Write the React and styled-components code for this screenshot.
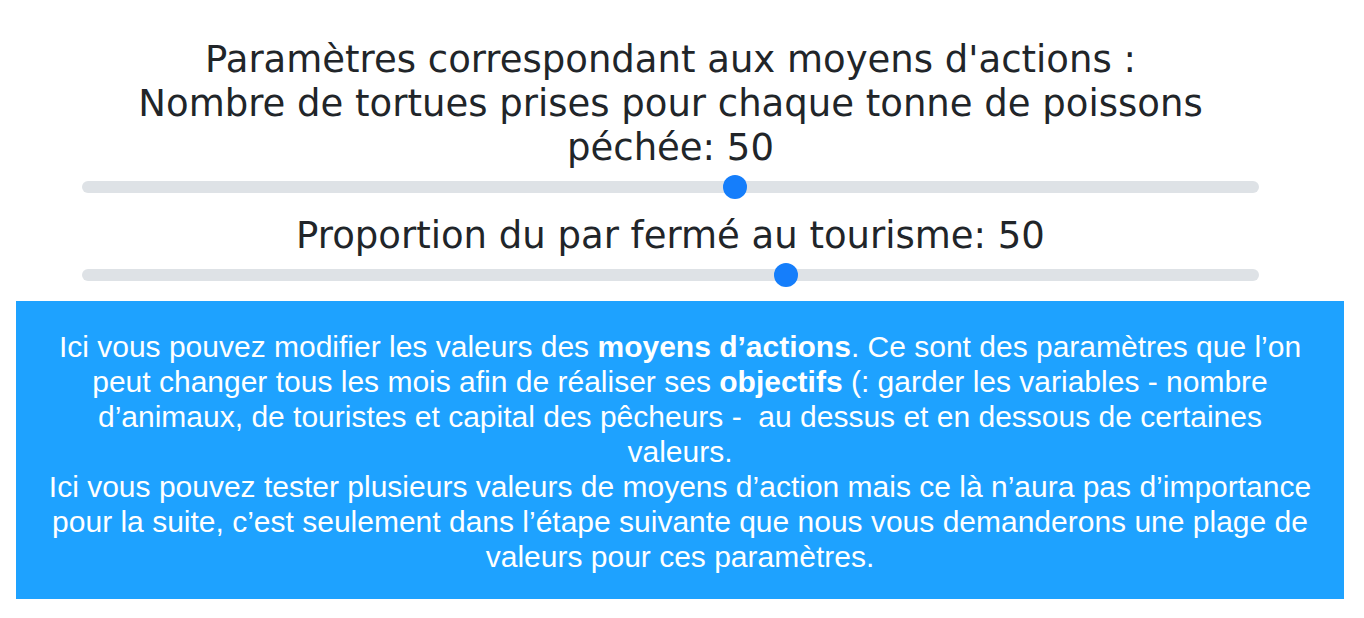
import React, { useState } from "react";
import styled, { createGlobalStyle } from "styled-components";

const GlobalStyle = createGlobalStyle`
  * { box-sizing: border-box; }
  body { margin: 0; background: #fff; }
`;

const Page = styled.main`
  padding: 38px 20px 19px 16px;
`;

const Parameters = styled.section`
  padding: 0 85px 0 66px;
  color: #212529;
  font-family: "DejaVu Sans", Verdana, sans-serif;
  font-size: 37px;
  line-height: 44px;
  text-align: center;
`;

const Title = styled.h1`
  margin: 0;
  font-size: inherit;
  font-weight: 400;
`;

const Field = styled.div`
  & + & { margin-top: 10px; }
`;

const Label = styled.label`
  display: block;
  padding: 0 48px;
`;

const Slider = styled.input`
  display: block;
  width: 100%;
  height: 34px;
  margin: 0;
  appearance: none;
  background: transparent;

  &::-webkit-slider-runnable-track {
    height: 12px;
    border-radius: 6px;
    background: #dee2e6;
  }

  &::-webkit-slider-thumb {
    appearance: none;
    width: 24px;
    height: 24px;
    margin-top: -6px;
    border-radius: 50%;
    background: #157efb;
  }
`;

const Notice = styled.section`
  margin-top: 9px;
  padding: 28px 28px 25px;
  background: #1ea2ff;
  color: #fff;
  font-family: "Liberation Sans", Helvetica, Arial, sans-serif;
  font-size: 30px;
  line-height: 35px;
  text-align: center;
`;

const Paragraph = styled.p`
  margin: 0;
`;

function Parameter({ id, label, min, max, value }) {
  const [current, setCurrent] = useState(value);
  return (
    <Field>
      <Label htmlFor={id}>{`${label}: ${current}`}</Label>
      <Slider id={id} type="range" min={min} max={max} value={current}
        onChange={(e) => setCurrent(Number(e.target.value))} />
    </Field>
  );
}

export default function App() {
  return (
    <Page>
      <GlobalStyle />
      <Parameters>
        <Title>Paramètres correspondant aux moyens d'actions :</Title>
        <Parameter id="turtles" min={0} max={90} value={50}
          label="Nombre de tortues prises pour chaque tonne de poissons péchée" />
        <Parameter id="park" min={20} max={70} value={50}
          label="Proportion du par fermé au tourisme" />
      </Parameters>
      <Notice>
        <Paragraph>
          Ici vous pouvez modifier les valeurs des <strong>moyens d’actions</strong>. Ce sont des
          paramètres que l’on peut changer tous les mois afin de réaliser ses{" "}
          <strong>objectifs</strong> (: garder les variables - nombre d’animaux, de touristes et
          capital des pêcheurs -&nbsp; au dessus et en dessous de certaines valeurs.
        </Paragraph>
        <Paragraph>
          Ici vous pouvez tester plusieurs valeurs de moyens d’action mais ce là n’aura pas
          d’importance pour la suite, c’est seulement dans l’étape suivante que nous vous
          demanderons une plage de valeurs pour ces paramètres.
        </Paragraph>
      </Notice>
    </Page>
  );
}
